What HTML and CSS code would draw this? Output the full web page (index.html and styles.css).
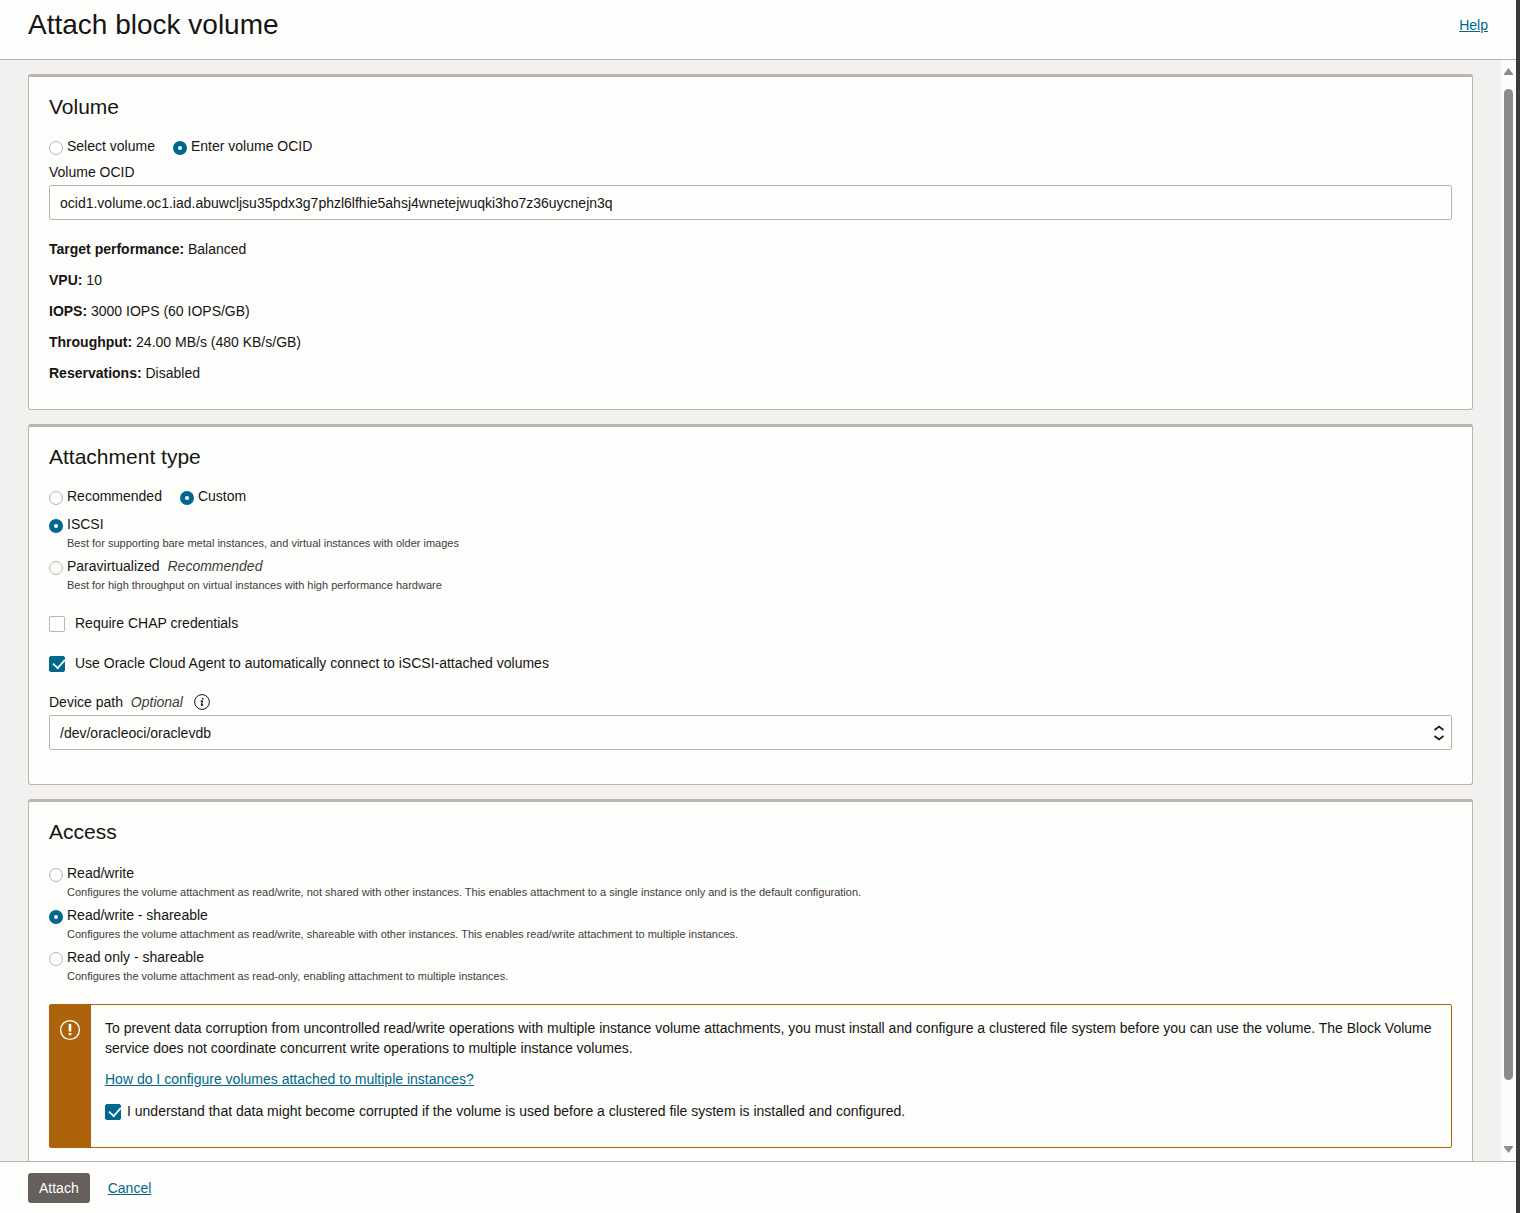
FILE: index.html
```html
<!DOCTYPE html>
<html lang="en">
<head>
  <meta charset="UTF-8" />
  <meta name="viewport" content="width=device-width, initial-scale=1.0" />
  <title>Attach block volume</title>
  <link rel="stylesheet" href="styles.css">
</head>
<body>
  <form class="panel">
    <header class="panel-header">
      <h1>Attach block volume</h1>
      <a href="#">Help</a>
    </header>

    <div class="panel-body">
      <main class="content">
        <section class="card">
          <h2>Volume</h2>
          <div class="radio-row">
            <label class="choice"><input type="radio" name="source" /> <span>Select volume</span></label>
            <label class="choice"><input type="radio" name="source" checked /> <span>Enter volume OCID</span></label>
          </div>
          <div class="field">
            <label for="ocid">Volume OCID</label>
            <input type="text" class="control" id="ocid" value="ocid1.volume.oc1.iad.abuwcljsu35pdx3g7phzl6lfhie5ahsj4wnetejwuqki3ho7z36uycnejn3q" />
          </div>
          <div class="details">
            <p><b>Target performance:</b> Balanced</p>
            <p><b>VPU:</b> 10</p>
            <p><b>IOPS:</b> 3000 IOPS (60 IOPS/GB)</p>
            <p><b>Throughput:</b> 24.00 MB/s (480 KB/s/GB)</p>
            <p><b>Reservations:</b> Disabled</p>
          </div>
        </section>

        <section class="card card-attachment">
          <h2>Attachment type</h2>
          <div class="radio-row">
            <label class="choice"><input type="radio" name="mode" /> <span>Recommended</span></label>
            <label class="choice"><input type="radio" name="mode" checked /> <span>Custom</span></label>
          </div>
          <div class="options">
            <label class="choice">
              <input type="radio" name="type" checked />
              <span>ISCSI<small>Best for supporting bare metal instances, and virtual instances with older images</small></span>
            </label>
            <label class="choice">
              <input type="radio" name="type" />
              <span>Paravirtualized <i>Recommended</i><small>Best for high throughput on virtual instances with high performance hardware</small></span>
            </label>
          </div>
          <div class="checks">
            <label class="check"><input type="checkbox" /> <span>Require CHAP credentials</span></label>
            <label class="check"><input type="checkbox" checked /> <span>Use Oracle Cloud Agent to automatically connect to iSCSI-attached volumes</span></label>
          </div>
          <div class="field">
            <div class="field-label">
              <label for="device">Device path <i>Optional</i></label>
              <button type="button" class="info" aria-label="Device path information">
                <svg width="16" height="16" viewBox="0 0 16 16" fill="none" stroke="#161513">
                  <circle cx="8" cy="8" r="7.4" />
                  <circle cx="8.8" cy="4.6" r="0.9" fill="#161513" stroke="none" />
                  <path d="M6.6 7.2 8.4 6.9 7.4 11.1Q7.4 11.7 9.2 10.7" stroke-width="1.2" />
                </svg>
              </button>
            </div>
            <div class="select">
              <select class="control" id="device">
                <option>/dev/oracleoci/oraclevdb</option>
              </select>
              <svg width="12" height="16" viewBox="0 0 12 16" fill="none" stroke="#161513" stroke-width="1.6">
                <path d="M1.5 5 6 1.5 10.5 5M1.5 11 6 14.5 10.5 11" />
              </svg>
            </div>
          </div>
        </section>

        <section class="card card-access">
          <h2>Access</h2>
          <div class="options">
            <label class="choice">
              <input type="radio" name="access" />
              <span>Read/write<small>Configures the volume attachment as read/write, not shared with other instances. This enables attachment to a single instance only and is the default configuration.</small></span>
            </label>
            <label class="choice">
              <input type="radio" name="access" checked />
              <span>Read/write - shareable<small>Configures the volume attachment as read/write, shareable with other instances. This enables read/write attachment to multiple instances.</small></span>
            </label>
            <label class="choice">
              <input type="radio" name="access" />
              <span>Read only - shareable<small>Configures the volume attachment as read-only, enabling attachment to multiple instances.</small></span>
            </label>
          </div>
          <div class="alert">
            <div class="alert-icon">
              <svg width="22" height="22" viewBox="0 0 22 22" fill="none" stroke="#fff">
                <circle cx="11" cy="11" r="9.4" stroke-width="1.4" />
                <path d="M11 5V12.5M11 14V16.2" stroke-width="2.6" />
              </svg>
            </div>
            <div class="alert-text">
              <p>To prevent data corruption from uncontrolled read/write operations with multiple instance volume attachments, you must install and configure a clustered file system before you can use the volume. The Block Volume service does not coordinate concurrent write operations to multiple instance volumes.</p>
              <p><a href="#">How do I configure volumes attached to multiple instances?</a></p>
              <label class="check"><input type="checkbox" checked /> <span>I understand that data might become corrupted if the volume is used before a clustered file system is installed and configured.</span></label>
            </div>
          </div>
        </section>
      </main>

      <div class="scrollbar">
        <svg width="9" height="8" viewBox="0 0 9 8"><path d="M4.5 0 9 6V7H0V6Z" fill="#8b8b8b" /></svg>
        <div class="thumb"></div>
        <svg width="9" height="8" viewBox="0 0 9 8"><path d="M4.5 8 9 2V1H0V2Z" fill="#8b8b8b" /></svg>
      </div>
    </div>

    <footer class="panel-footer">
      <button type="button" class="attach">Attach</button>
      <a href="#">Cancel</a>
    </footer>
  </form>
</body>
</html>
```
FILE: styles.css
```css
* {
  box-sizing: border-box;
}
body {
  margin: 0;
  font-family: "Liberation Sans", Arial, sans-serif;
  font-size: 14px;
  line-height: 20px;
  color: #161513;
}
h1, h2, p {
  margin: 0;
  font-weight: normal;
}
h1 {
  font-size: 28px;
  line-height: 34px;
}
h2 {
  font-size: 21px;
  line-height: 24px;
}
a {
  color: #00688c;
}
i {
  color: #3f3c3a;
  margin-left: 4px;
}
.panel {
  display: flex;
  flex-direction: column;
  height: 100vh;
  background: #fdfdfb;
  border-right: 4px solid #3a3a3a;
}
.panel-header {
  display: flex;
  justify-content: space-between;
  align-items: center;
  padding: 8px 28px 17px;
  border-bottom: 1px solid #b8b4b0;
}
.panel-body {
  display: flex;
  flex: 1;
  min-height: 0;
}
.content {
  flex: 1;
  padding: 14px 28px;
  overflow: hidden;
  background: #f2f1ef;
}
.card {
  margin-bottom: 14px;
  padding: 18px 20px 26px;
  border: 1px solid #bbb5af;
  border-top-width: 3px;
  border-radius: 3px;
  background: #fdfdfb;
}
.card-attachment {
  padding-bottom: 34px;
}

/* radios and tick boxes */
.radio-row {
  display: flex;
  gap: 18px;
  margin-top: 17px;
}
.choice {
  display: flex;
  gap: 4px;
}
.choice input {
  appearance: none;
  flex: none;
  width: 14px;
  height: 14px;
  margin: 5px 0 0;
  border: 1px solid #b8b4b0;
  border-radius: 50%;
}
.choice input:checked {
  border: 5px solid #00688c;
  background: #fff;
}
.options {
  display: flex;
  flex-direction: column;
  gap: 6px;
  margin-top: 8px;
}
.card-access .options {
  margin-top: 19px;
}
small {
  display: block;
  margin-top: 2px;
  font-size: 11px;
  line-height: 14px;
  color: #3f3c3a;
}
.checks {
  display: flex;
  flex-direction: column;
  gap: 20px;
  margin: 21px 0 19px;
}
.check {
  display: flex;
  gap: 10px;
}
.check input {
  appearance: none;
  flex: none;
  width: 16px;
  height: 16px;
  margin: 3px 0 0;
  border: 1px solid #b8b4b0;
  border-radius: 2px;
}
.check input:checked {
  border-color: #00688c;
  background: #00688c;
}
.check input:checked::after {
  content: "";
  display: block;
  width: 6px;
  height: 11px;
  margin-left: 5px;
  border: solid #fff;
  border-width: 0 2px 2px 0;
  transform: translateY(-1px) rotate(42deg) scale(0.9);
}

/* fields */
.field {
  margin-top: 6px;
}
.field > label {
  display: block;
}
.field-label {
  display: flex;
  align-items: center;
  gap: 11px;
  height: 20px;
}
.info {
  display: flex;
  padding: 0;
  border: 0;
  background: none;
}
.control {
  appearance: none;
  display: block;
  width: 100%;
  height: 35px;
  margin: 3px 0 0;
  padding: 0 10px;
  border: 1px solid #b8b4b0;
  border-radius: 2px;
  background: #fdfdfb;
  color: #161513;
  font: inherit;
}
.select {
  position: relative;
}
.select svg {
  position: absolute;
  right: 7px;
  top: 10px;
  pointer-events: none;
}
.details {
  display: flex;
  flex-direction: column;
  gap: 11px;
  margin-top: 19px;
}

/* warning */
.alert {
  display: flex;
  margin-top: 21px;
  border: 1px solid #ac630c;
  border-radius: 2px;
}
.alert-icon {
  flex: none;
  width: 41px;
  padding: 14px 9px;
  background: #ac630c;
}
.alert-text {
  padding: 13px 14px 26px;
}
.alert-text p {
  margin-bottom: 11px;
}
.alert-text .check {
  gap: 6px;
  margin-top: 12px;
}

.scrollbar {
  display: flex;
  flex-direction: column;
  align-items: center;
  width: 15px;
  padding: 8px 0;
  background: #fcfcfe;
}
.scrollbar svg {
  flex: none;
}
.thumb {
  flex: 1;
  width: 9px;
  margin: 13px 0 65px;
  border-radius: 5px;
  background: #8b8b8b;
}
.panel-footer {
  display: flex;
  align-items: center;
  gap: 18px;
  padding: 11px 28px 10px;
  border-top: 1px solid #b8b4b0;
}
.attach {
  height: 30px;
  padding: 0 11px;
  border: 0;
  border-radius: 3px;
  background: #665f5b;
  color: #fff;
  font: inherit;
}
```
